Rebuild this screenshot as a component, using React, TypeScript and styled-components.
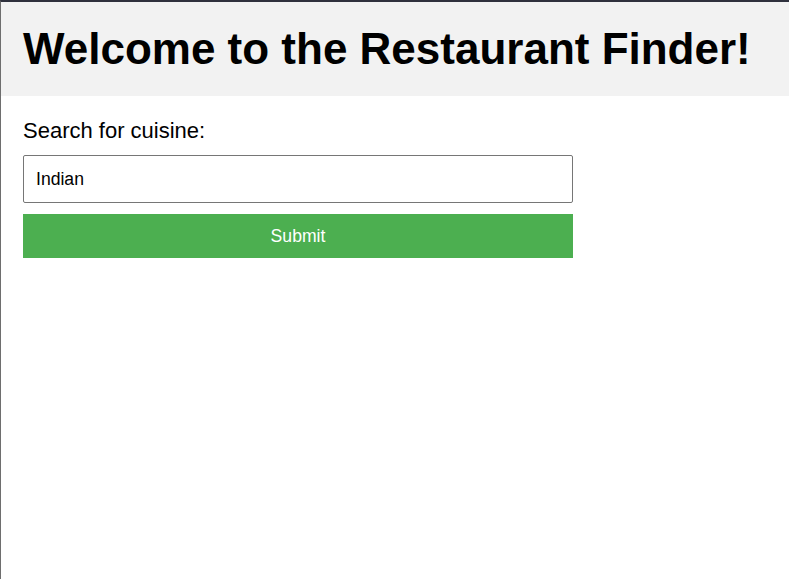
import React, { useState } from "react";
import styled, { createGlobalStyle } from "styled-components";

const GlobalStyle = createGlobalStyle`
  * {
    box-sizing: border-box;
  }
  html, body {
    margin: 0;
    padding: 0;
    height: 100%;
  }
  body {
    font-family: "Liberation Sans", Arial, sans-serif;
    background: #fff;
    color: #000;
    border-top: 2px solid #2f313d;
    border-left: 1px solid #6e6e6e;
  }
`;

const Header = styled.header`
  background-color: #f2f2f2;
  padding: 21px 22px 22px;
`;

const Title = styled.h1`
  margin: 0;
  font-size: 44px;
  line-height: 51px;
  font-weight: 700;
`;

const Main = styled.main`
  padding: 22px;
`;

const Form = styled.form`
  display: flex;
  flex-direction: column;
  width: 550px;
`;

const Label = styled.label`
  font-size: 22px;
  line-height: 25px;
  margin-bottom: 12px;
`;

const Input = styled.input`
  height: 48px;
  padding: 0 12px;
  font-family: inherit;
  font-size: 17.6px;
  color: #000;
  border: 1px solid #767676;
  border-radius: 2px;
  outline: none;
  margin-bottom: 11px;
`;

const SubmitButton = styled.button`
  height: 44px;
  border: none;
  background-color: #4caf50;
  color: #fff;
  font-family: inherit;
  font-size: 17.6px;
  cursor: pointer;
`;

const App = () => {
  const [cuisine, setCuisine] = useState<string>("Indian");

  const handleSubmit = (e: React.SyntheticEvent) => {
    e.preventDefault();
  };

  return (
    <>
      <GlobalStyle />
      <Header>
        <Title>Welcome to the Restaurant Finder!</Title>
      </Header>
      <Main>
        <Form onSubmit={handleSubmit}>
          <Label htmlFor="cuisine">Search for cuisine:</Label>
          <Input
            id="cuisine"
            type="text"
            value={cuisine}
            onChange={(e) => setCuisine(e.target.value)}
          />
          <SubmitButton type="submit">Submit</SubmitButton>
        </Form>
      </Main>
    </>
  );
};

export default App;
